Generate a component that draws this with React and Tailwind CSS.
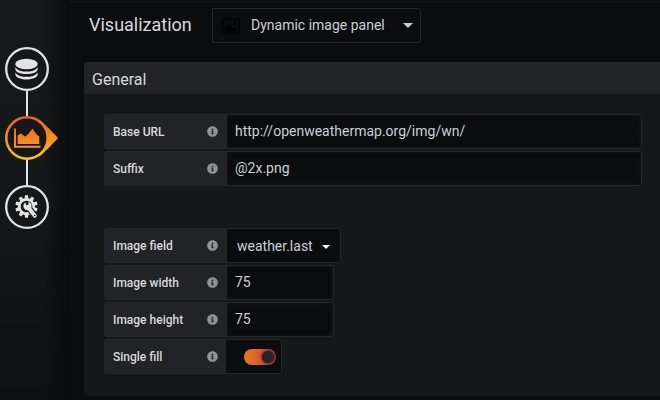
import { FaInfoCircle } from "react-icons/fa";

const GEAR_TEETH = [0, 36, 72, 108, 144, 180, 216, 252, 288, 324];

function DataIcon() {
  return (
    <svg width="44" height="44" viewBox="0 0 44 44" className="block">
      <circle cx="22" cy="22" r="20.8" fill="#161719" stroke="#e3e3e3" strokeWidth="2.3" />
      <g fill="#e3e3e3">
        <ellipse cx="21.5" cy="17" rx="11.3" ry="5.2" />
        <path d="M10.3 20.2c2 3.2 6.3 4.4 11.2 4.4s9.2-1.2 11.2-4.4v1.700c0 3-5 5-11.200 5s-11.200-2-11.200-5z" />
        <path d="M10.3 25.4c2 3.2 6.3 4.4 11.2 4.4s9.2-1.2 11.2-4.4v1.700c0 3.200-5 5.500-11.200 5.500s-11.200-2.300-11.200-5.500z" />
      </g>
    </svg>
  );
}

function ChartIcon() {
  return (
    <svg width="53" height="44" viewBox="0 0 53 44" className="block">
      <defs>
        <linearGradient id="ring" x1="0" y1="0" x2="0" y2="44" gradientUnits="userSpaceOnUse">
          <stop offset="0" stopColor="#f05a28" />
          <stop offset="1" stopColor="#fbca0a" />
        </linearGradient>
        <linearGradient id="area" x1="0" y1="10" x2="0" y2="33" gradientUnits="userSpaceOnUse">
          <stop offset="0" stopColor="#f2652a" />
          <stop offset="1" stopColor="#f99b1c" />
        </linearGradient>
      </defs>
      <path d="M34 3.5C40 8 48 16.500 53 22C48 27.500 40 36 34 40.500z" fill="url(#ring)" />
      <circle cx="22" cy="22" r="20.7" fill="#161719" stroke="url(#ring)" strokeWidth="2.5" />
      <path d="M9 12.500h2v17.300h24.500v1.900H9z" fill="url(#area)" />
      <path d="M12.600 27.900v-8.600l3.200-1.700l4.200 3l2.600-1.800l4.900-6.300l4.300 6.300l2.500 1.800v7.300z" fill="url(#area)" />
    </svg>
  );
}

function SettingsIcon() {
  return (
    <svg width="44" height="44" viewBox="0 0 44 44" className="block">
      <circle cx="22" cy="22" r="20.8" fill="#161719" stroke="#e3e3e3" strokeWidth="2.3" />
      <g transform="translate(21.500 21.500)">
        {GEAR_TEETH.map((angle) => (
          <path key={angle} d="M-1.900-7.500L-1.500-11.200h3L1.900-7.500z" fill="#e3e3e3" transform={`rotate(${angle})`} />
        ))}
        <circle r="7.200" fill="#161719" stroke="#e3e3e3" strokeWidth="2.700" />
      </g>
      <path d="M24.500 24L30.300 31.200" stroke="#161719" strokeWidth="6" strokeLinecap="round" />
      <path d="M23 22L29.800 30.700" stroke="#e3e3e3" strokeWidth="3.900" strokeLinecap="round" />
      <path
        d="M20.300 17.500L21.300 20.300L23.300 20L23.500 17C25.800 17.600 27 19.500 26.600 21.800C26.200 24 24.300 25.500 22.200 25.200C19.800 24.900 18.200 23 18.400 20.700C18.500 19.300 19.200 18.100 20.300 17.500z"
        fill="#e3e3e3"
      />
      <circle cx="29.700" cy="30.500" r=".8" fill="#161719" />
    </svg>
  );
}

function PictureIcon() {
  return (
    <svg width="18" height="16" viewBox="0 0 18 16" className="shrink-0">
      <rect x=".8" y=".8" width="16.4" height="14.4" rx="1" fill="none" stroke="#020203" strokeWidth="1.6" />
      <path d="M2.500 13.500v-2l4.500-5.500l4 4l1.500-1l3 3.500v1z" fill="#020203" />
      <circle cx="13.300" cy="5" r="1.900" fill="#020203" />
    </svg>
  );
}

function Caret() {
  return (
    <svg width="10" height="5" viewBox="0 0 10 5" className="shrink-0">
      <path d="M0 0h10L5 5z" fill="currentColor" />
    </svg>
  );
}

function Row({ label, children, narrow }) {
  return (
    <div className="flex h-[35px]">
      <div
        className={`flex shrink-0 items-center justify-between rounded-l-[3px] border border-r-0 border-[#262628] bg-[#222326] pl-2 text-[12px] font-medium text-[#d8d9da] ${narrow ? "w-[122px] pr-[8px]" : "w-[123px] pr-[9px]"}`}
      >
        <span>{label}</span>
        <FaInfoCircle size={11} color="#929292" />
      </div>
      {children}
    </div>
  );
}

function TextField({ value, className }) {
  return (
    <div
      className={`flex items-center rounded-r-[3px] border border-l-0 border-[#262628] bg-[#0b0c0e] pl-2 text-[14px] text-[#c7d0d9] shadow-[inset_0_0_4px_#161719] ${className}`}
    >
      {value}
    </div>
  );
}

export default function App() {
  return (
    <div className="flex h-[400px] w-[660px] overflow-hidden bg-[#0b0c0e] font-[Roboto,sans-serif] text-[#d8d9da]">
      <nav className="flex w-[69px] shrink-0 flex-col items-start bg-[linear-gradient(90deg,transparent_65%,#090a0b_100%),linear-gradient(180deg,#17181a_0,#161719_45%,#0f1011_100%)] pt-[47px] pl-[5px]">
        <DataIcon />
        <div className="ml-[21px] h-[25px] w-[2px] bg-[#e3e3e3]" />
        <ChartIcon />
        <div className="ml-[21px] h-[25px] w-[2px] bg-[#e3e3e3]" />
        <SettingsIcon />
      </nav>
      <main className="flex min-w-0 grow flex-col border-t-[3px] border-[#0f1011] pl-[15px]">
        <header className="flex h-[59px] items-start pt-[5px] pl-[5px]">
          <h1 className="w-[123px] pt-[3px] text-[18px] leading-[27px]">Visualization</h1>
          <div className="flex h-[35px] w-[209px] items-center rounded-r-[3px] border border-[#262628] pr-[7px] pl-[9px] text-[14px] text-[#c7d0d9]">
            <PictureIcon />
            <span className="ml-[11px] grow">Dynamic image panel</span>
            <Caret />
          </div>
        </header>
        <section className="h-[334px] overflow-hidden rounded-l-[3px] bg-[#161719]">
          <h2 className="flex h-8 items-center bg-[#222326] pt-[4px] pl-2 text-[16px]">General</h2>
          <div className="flex flex-col gap-[2px] pt-5 pl-5">
            <Row label="Base URL">
              <TextField value="http://openweathermap.org/img/wn/" className="w-[415px]" />
            </Row>
            <Row label="Suffix">
              <TextField value="@2x.png" className="w-[415px]" />
            </Row>
          </div>
          <div className="flex flex-col gap-[2px] pt-[42px] pl-5">
            <Row label="Image field">
              <div className="flex w-[114px] items-center justify-between rounded-r-[3px] border border-l-0 border-[#262628] bg-[#0b0c0e] pt-[2px] pr-[10px] pl-[10px] text-[14px] text-[#c7d0d9]">
                <span>weather.last</span>
                <svg width="8" height="4" viewBox="0 0 8 4">
                  <path d="M0 0h8L4 4z" fill="#fff" />
                </svg>
              </div>
            </Row>
            <Row label="Image width">
              <TextField value="75" className="w-[107px]" />
            </Row>
            <Row label="Image height">
              <TextField value="75" className="w-[107px]" />
            </Row>
            <Row label="Single fill" narrow>
              <div className="flex w-[56px] items-center justify-end rounded-r-[3px] border border-l-0 border-[#262628] bg-[#0b0c0e] pr-[5px]">
                <div className="flex h-4 w-8 items-center justify-end rounded-full bg-linear-to-r from-[#eb7b18] to-[#b7363a] pr-[2px]">
                  <div className="size-3 rounded-full bg-[#262628] shadow-[0_0_3px_#000]" />
                </div>
              </div>
            </Row>
          </div>
        </section>
      </main>
    </div>
  );
}
